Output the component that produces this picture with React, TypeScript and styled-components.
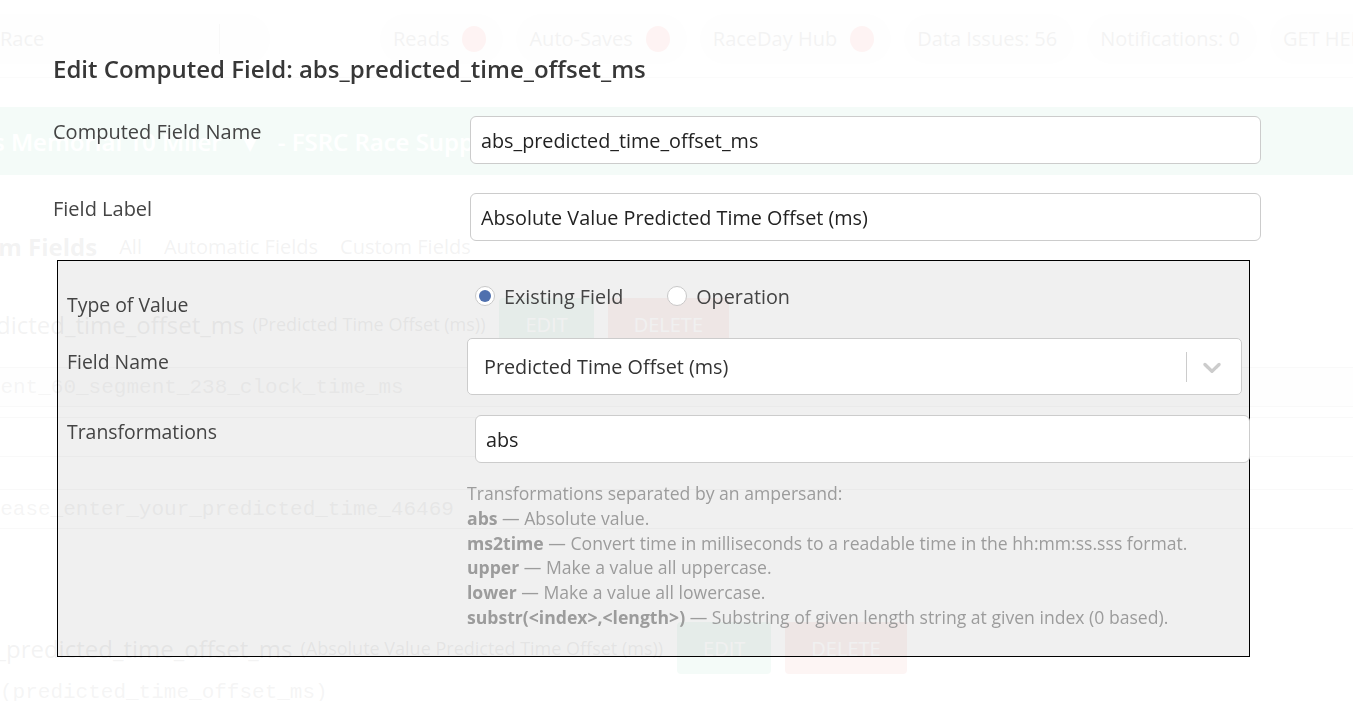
import styled, { createGlobalStyle, css } from 'styled-components'

const GlobalStyle = createGlobalStyle`
  html, body {
    margin: 0;
    padding: 0;
  }
  body {
    font-family: 'Open Sans', 'Noto Sans', sans-serif;
    background: #fff;
    color: #333;
    overflow: hidden;
  }
  * {
    box-sizing: border-box;
  }
`

/* ---------- faded page behind the modal ---------- */

const Page = styled.div`
  height: 701px;
  overflow: hidden;
`

const TopNav = styled.nav`
  display: flex;
  align-items: center;
  height: 78px;
  border-bottom: 1px solid #bbb;
  white-space: nowrap;

  & > * {
    flex-shrink: 0;
  }
`

const RaceSelect = styled.div`
  display: flex;
  align-items: center;
  width: 300px;
  height: 50px;
  margin: 0 110px 0 -30px;
  padding-left: 30px;
  border-radius: 25px;
  background: #e0e0e0;
  color: #333;
  font-size: 20px;

  span {
    flex: 1;
  }

  i {
    width: 1px;
    height: 30px;
    background: #888;
    margin-right: 50px;
  }
`

const Pill = styled.div`
  display: flex;
  align-items: center;
  gap: 13px;
  height: 50px;
  padding: 0 17px 0 13px;
  margin-right: 13px;
  border-radius: 25px;
  background: #e4e4e4;
  color: #333;
  font-size: 20px;
`

const Dot = styled.span`
  width: 24px;
  height: 26px;
  border-radius: 50%;
  background: #e53935;
`

const Banner = styled.div`
  height: 68px;
  margin-top: 29px;
  margin-left: -58px;
  background: #48bc8a;
  color: #fff;
  font-size: 24px;
  font-weight: 600;
  display: flex;
  align-items: center;
  gap: 22px;
  white-space: nowrap;
`

const Tabs = styled.div`
  display: flex;
  align-items: center;
  gap: 22px;
  margin: 55px 0 0 -70px;
  font-size: 20px;
  color: #333;
  white-space: nowrap;

  strong {
    font-size: 24px;
  }
`

const FieldRow = styled.div<{ $indent: number; $top: number }>`
  display: flex;
  align-items: center;
  gap: 8px;
  height: 54px;
  margin-top: ${({ $top }) => $top}px;
  margin-left: ${({ $indent }) => -$indent}px;
  white-space: nowrap;
  font-size: 18px;
  color: #333;

  b {
    font-size: 24px;
    font-weight: 400;
  }
`

const Btn = styled.div<{ $kind: 'edit' | 'delete' }>`
  height: 52px;
  margin-left: 6px;
  padding: 0 26px;
  display: flex;
  align-items: center;
  border-radius: 4px;
  color: #fff;
  font-size: 20px;
  ${({ $kind }) =>
    $kind === 'edit'
      ? css`
          background: #45b384;
        `
      : css`
          background: #d9534f;
        `}
`

const CodeRow = styled.div<{ $indent: number; $top: number; $shaded?: boolean }>`
  height: 40px;
  margin-top: ${({ $top }) => $top}px;
  margin-left: ${({ $indent }) => -$indent}px;
  display: flex;
  align-items: center;
  border-top: 1px solid #999;
  border-bottom: 1px solid #999;
  background: ${({ $shaded }) => ($shaded ? '#eee' : 'transparent')};
  font-family: 'Liberation Mono', monospace;
  font-size: 21px;
  color: #555;
  white-space: nowrap;
`

const PlainCode = styled.div`
  margin: 6px 0 0 0;
  font-family: 'Liberation Mono', monospace;
  font-size: 21px;
  color: #555;
  white-space: nowrap;
`

const BackgroundPage = () => (
  <Page>
    <TopNav>
      <RaceSelect>
        <span>Race</span>
        <i />
      </RaceSelect>
      <Pill>
        Reads <Dot />
      </Pill>
      <Pill>
        Auto-Saves <Dot />
      </Pill>
      <Pill>
        RaceDay Hub <Dot />
      </Pill>
      <Pill>Data Issues: 56</Pill>
      <Pill>Notifications: 0</Pill>
      <Pill>GET HELP</Pill>
    </TopNav>
    <Banner>
      <span>Davis Memorial 10 Miler</span>
      <span>▾</span>
      <span>- FSRC Race Support</span>
    </Banner>
    <Tabs>
      <strong>Custom Fields</strong>
      <span>All</span>
      <span>Automatic Fields</span>
      <span>Custom Fields</span>
    </Tabs>
    <FieldRow $indent={42} $top={34}>
      <b>predicted_time_offset_ms</b>
      (Predicted Time Offset (ms))
      <Btn $kind='edit'>EDIT</Btn>
      <Btn $kind='delete'>DELETE</Btn>
    </FieldRow>
    <CodeRow $indent={50} $top={16} $shaded>
      segment_60_segment_238_clock_time_ms
    </CodeRow>
    <CodeRow $indent={0} $top={10} />
    <CodeRow $indent={25} $top={32}>
      please_enter_your_predicted_time_46469
    </CodeRow>
    <FieldRow $indent={44} $top={92}>
      <b>abs_predicted_time_offset_ms</b>
      (Absolute Value Predicted Time Offset (ms))
      <Btn $kind='edit'>EDIT</Btn>
      <Btn $kind='delete'>DELETE</Btn>
    </FieldRow>
    <PlainCode>(predicted_time_offset_ms)</PlainCode>
  </Page>
)

/* ---------- modal ---------- */

const Overlay = styled.div`
  position: fixed;
  inset: 0;
  background: rgba(255, 255, 255, 0.94);
`

const Modal = styled.div`
  width: 1261px;
  padding: 55px 0 0 53px;
  color: #444;
`

const Title = styled.h2`
  margin: 0 0 33px;
  font-size: 24px;
  line-height: 28px;
  font-weight: 600;
  color: #373737;
`

const FormRow = styled.div`
  display: grid;
  grid-template-columns: 417px 791px;
  align-items: start;

  & + & {
    margin-top: 29px;
  }
`

const Label = styled.label<{ $offset?: number; $size?: number }>`
  font-size: ${({ $size }) => $size ?? 20}px;
  line-height: 26px;
  padding-top: ${({ $offset }) => $offset ?? 3}px;
  color: #444;
`

const TextInput = styled.input<{ $shift?: number }>`
  width: 100%;
  height: 48px;
  padding: 0 10px;
  margin-left: ${({ $shift }) => $shift ?? 0}px;
  border: 1px solid #ccc;
  border-radius: 6px;
  background: #fff;
  font-family: inherit;
  font-size: 19.8px;
  color: #222;
  outline: none;
`

const ValueBox = styled.div`
  width: 1193px;
  height: 397px;
  margin: 19px 0 0 4px;
  padding: 23px 0 0 9px;
  border: 1px solid #000;
  background: rgba(0, 0, 0, 0.058);
`

const BoxRow = styled.div<{ $gap: number }>`
  display: grid;
  grid-template-columns: 400px 775px;
  align-items: start;
  margin-top: ${({ $gap }) => $gap}px;
`

const RadioGroup = styled.div`
  display: flex;
  align-items: center;
  height: 24px;
  padding-left: 8px;
`

const RadioOption = styled.label`
  display: flex;
  align-items: center;
  gap: 9px;
  margin-right: 44px;
  font-size: 19.8px;
  color: #444;
`

const RadioCircle = styled.span<{ $checked?: boolean }>`
  width: 20px;
  height: 20px;
  border-radius: 50%;
  border: 1px solid #c8c8c8;
  background: #fff;
  display: flex;
  align-items: center;
  justify-content: center;

  ${({ $checked }) =>
    $checked &&
    css`
      &:after {
        content: '';
        width: 12px;
        height: 12px;
        border-radius: 50%;
        background: #4f70ae;
      }
    `}
`

const SelectBox = styled.div`
  height: 57px;
  display: flex;
  align-items: center;
  padding-left: 16px;
  border: 1px solid #ccc;
  border-radius: 5px;
  background: #fff;
  font-size: 19.8px;
  color: #333;
`

const SelectValue = styled.span`
  flex: 1;
`

const SelectSeparator = styled.span`
  width: 1px;
  height: 30px;
  background: #ccc;
`

const SelectArrow = styled.span`
  display: flex;
  padding: 0 14px 0 10px;
  color: #ccc;
`

const HelpText = styled.div`
  grid-column: 2;
  margin-top: 18px;
  font-size: 17.6px;
  line-height: 24.8px;
  color: #9c9c9c;

  b {
    font-weight: 700;
  }
`

const Chevron = () => (
  <svg width='30' height='30' viewBox='0 0 20 20' fill='currentColor'>
    <path d='M4.516 7.548c0.436-0.446 1.043-0.481 1.576 0l3.908 3.747 3.908-3.747c0.533-0.481 1.141-0.446 1.574 0 0.436 0.445 0.408 1.197 0 1.615-0.406 0.418-4.695 4.502-4.695 4.502-0.217 0.223-0.502 0.335-0.787 0.335s-0.57-0.112-0.789-0.335c0 0-4.287-4.084-4.695-4.502s-0.436-1.17 0-1.615z' />
  </svg>
)

const EditComputedField = () => (
  <Overlay>
    <Modal>
      <Title>Edit Computed Field: abs_predicted_time_offset_ms</Title>

      <FormRow>
        <Label>Computed Field Name</Label>
        <TextInput defaultValue='abs_predicted_time_offset_ms' />
      </FormRow>
      <FormRow>
        <Label>Field Label</Label>
        <TextInput defaultValue='Absolute Value Predicted Time Offset (ms)' />
      </FormRow>

      <ValueBox>
        <BoxRow $gap={0}>
          <Label $offset={8} $size={19.4}>
            Type of Value
          </Label>
          <RadioGroup>
            <RadioOption>
              <RadioCircle $checked />
              Existing Field
            </RadioOption>
            <RadioOption>
              <RadioCircle />
              Operation
            </RadioOption>
          </RadioGroup>
        </BoxRow>

        <BoxRow $gap={20}>
          <Label $offset={11} $size={19.4}>
            Field Name
          </Label>
          <SelectBox>
            <SelectValue>Predicted Time Offset (ms)</SelectValue>
            <SelectSeparator />
            <SelectArrow>
              <Chevron />
            </SelectArrow>
          </SelectBox>
        </BoxRow>

        <BoxRow $gap={20}>
          <Label $offset={4} $size={19.4}>
            Transformations
          </Label>
          <TextInput $shift={8} defaultValue='abs' />
          <HelpText>
            Transformations separated by an ampersand:
            <br />
            <b>abs</b> — Absolute value.
            <br />
            <b>ms2time</b> — Convert time in milliseconds to a readable time in the hh:mm:ss.sss format.
            <br />
            <b>upper</b> — Make a value all uppercase.
            <br />
            <b>lower</b> — Make a value all lowercase.
            <br />
            <b>substr(&lt;index&gt;,&lt;length&gt;)</b> — Substring of given length string at given index (0 based).
          </HelpText>
        </BoxRow>
      </ValueBox>
    </Modal>
  </Overlay>
)

export default function App() {
  return (
    <>
      <GlobalStyle />
      <BackgroundPage />
      <EditComputedField />
    </>
  )
}
